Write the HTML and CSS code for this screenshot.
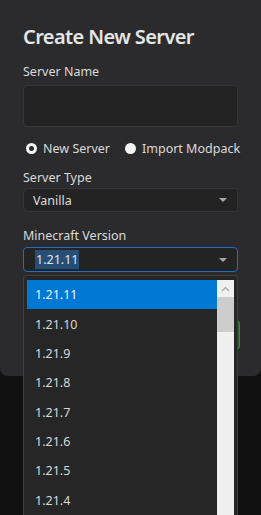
FILE: index.html
```html
<!DOCTYPE html>
<html>
<head>
<meta charset="utf-8">
<link rel="stylesheet" href="styles.css">
</head>
<body>
<div class="dialog">
  <h1 class="title">Create New Server</h1>
  <div class="label">Server Name</div>
  <div class="input"></div>
  <div class="radios">
    <span class="radio checked"></span><span class="radio-text">New Server</span>
    <span class="radio"></span><span class="radio-text">Import Modpack</span>
  </div>
  <div class="label">Server Type</div>
  <div class="select"><span class="select-text">Vanilla</span><span class="arrow"></span></div>
  <div class="label">Minecraft Version</div>
  <div class="select focus"><span class="select-text"><span class="hl">1.21.11</span></span><span class="arrow"></span></div>
  <div class="actions"><span class="btn">Create</span></div>
</div>
<div class="popup">
  <div class="list">
    <div class="item active">1.21.11</div>
    <div class="item">1.21.10</div>
    <div class="item">1.21.9</div>
    <div class="item">1.21.8</div>
    <div class="item">1.21.7</div>
    <div class="item">1.21.6</div>
    <div class="item">1.21.5</div>
    <div class="item">1.21.4</div>
  </div>
  <div class="scrollbar">
    <div class="sb-btn"><svg width="9" height="6" viewBox="0 0 9 6"><path d="M1 5 L4.5 1.5 L8 5" fill="none" stroke="#a3a3a3" stroke-width="1.2"/></svg></div>
    <div class="sb-thumb"></div>
  </div>
</div>
</body>
</html>
```
FILE: styles.css
```css
html, body {
  margin: 0;
  padding: 0;
}
body {
  background: #101010;
  width: 261px;
  height: 515px;
  overflow: hidden;
  position: relative;
  font-family: "Noto Sans", "Open Sans", sans-serif;
  color: #dcdcdc;
}
.dialog {
  box-sizing: border-box;
  width: 261px;
  height: 376px;
  background: #2b2b2d;
  border-radius: 0 0 8px 8px;
  padding: 24px 23px 0 23px;
  display: flex;
  flex-direction: column;
}
.title {
  margin: 0;
  font-size: 20px;
  line-height: 26px;
  font-weight: 600;
  color: #e6e6e6;
  letter-spacing: -0.6px;
}
.label {
  font-size: 12.5px;
  line-height: 16px;
  color: #dadada;
  margin-top: 18px;
}
.title + .label {
  margin-top: 14px;
}
.input {
  margin-top: 5px;
  height: 42px;
  box-sizing: border-box;
  background: #232323;
  border: 1px solid #363636;
  border-radius: 4px;
}
.radios {
  display: flex;
  align-items: center;
  margin-top: 13px;
  height: 16px;
  font-size: 12.5px;
  white-space: nowrap;
  margin-right: -6px;
}
.radio {
  box-sizing: border-box;
  flex: none;
  width: 11px;
  height: 11px;
  border-radius: 50%;
  background: #f4f4f4;
  margin-left: 3px;
  margin-right: 6px;
}
.radio.checked {
  background: #2b2b2d;
  border: 3.5px solid #f4f4f4;
}
.radio-text {
  flex: none;
  color: #dadada;
}
.radio-text + .radio {
  margin-left: 15px;
}
.radios + .label {
  margin-top: 14px;
}
.select {
  margin-top: 2px;
  height: 24px;
  box-sizing: border-box;
  background: #232323;
  border: 1px solid #363636;
  border-radius: 4px;
  display: flex;
  align-items: center;
  justify-content: space-between;
  padding: 0 10px 0 9px;
  font-size: 12.5px;
}
.select + .label {
  margin-top: 16px;
}
.select.focus {
  height: 25px;
  border-color: #1d6fc2;
  padding-left: 11px;
  margin-top: 3px;
}
.hl {
  background: #264f78;
  color: #e4e4e4;
  padding: 1px 1px;
}
.arrow {
  width: 0;
  height: 0;
  border-left: 4px solid transparent;
  border-right: 4px solid transparent;
  border-top: 4px solid #a8a8a8;
}
.actions {
  display: flex;
  justify-content: flex-end;
  margin-top: 47px;
  margin-right: -2px;
}
.btn {
  box-sizing: border-box;
  height: 32px;
  width: 74px;
  border: 1.5px solid #2f8f3a;
  border-radius: 5px;
  background: #2a5e30;
  color: #fff;
  font-size: 12.5px;
  display: flex;
  align-items: center;
  justify-content: center;
}
.popup {
  position: absolute;
  left: 23px;
  top: 275px;
  width: 215px;
  height: 240px;
  box-sizing: border-box;
  background: #262626;
  border: 1px solid #3e3e3e;
  border-bottom: none;
  border-radius: 4px 4px 0 0;
  padding: 4px 3px 0 3px;
  display: flex;
}
.list {
  flex: 1;
  display: flex;
  flex-direction: column;
}
.item {
  height: 29.35px;
  flex: none;
  display: flex;
  align-items: center;
  padding-left: 8px;
  font-size: 12.5px;
  color: #d8d8d8;
}
.item.active {
  background: #0078d4;
  color: #f0f0f0;
}
.scrollbar {
  width: 17px;
  background: #f0f0f0;
  display: flex;
  flex-direction: column;
}
.sb-btn {
  height: 17px;
  display: flex;
  align-items: center;
  justify-content: center;
}
.sb-thumb {
  height: 35px;
  background: #cdcdcd;
}
```
